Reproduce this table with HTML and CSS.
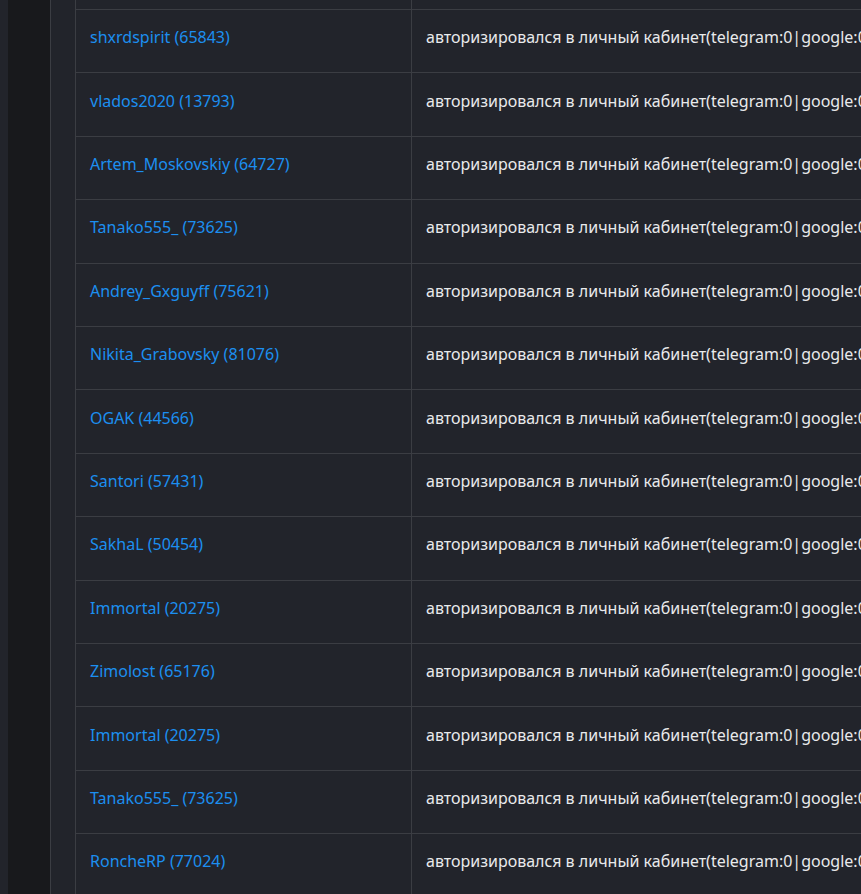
FILE: index.html
```html
<!DOCTYPE html>
<html lang="ru">
<head>
<meta charset="utf-8">
<link rel="stylesheet" href="styles.css">
</head>
<body>
<div class="layout">
  <div class="edge"></div>
  <aside class="sidebar"></aside>
  <main class="content">
    <div class="table">
      <div class="row row-partial"><div class="cell user"></div><div class="cell action"></div></div>
      <div class="row"><div class="cell user"><a href="#">shxrdspirit (65843)</a></div><div class="cell action">авторизировался в личный кабинет(telegram:0|google:0)</div></div>
      <div class="row"><div class="cell user"><a href="#">vlados2020 (13793)</a></div><div class="cell action">авторизировался в личный кабинет(telegram:0|google:0)</div></div>
      <div class="row"><div class="cell user"><a href="#">Artem_Moskovskiy (64727)</a></div><div class="cell action">авторизировался в личный кабинет(telegram:0|google:0)</div></div>
      <div class="row"><div class="cell user"><a href="#">Tanako555_ (73625)</a></div><div class="cell action">авторизировался в личный кабинет(telegram:0|google:0)</div></div>
      <div class="row"><div class="cell user"><a href="#">Andrey_Gxguyff (75621)</a></div><div class="cell action">авторизировался в личный кабинет(telegram:0|google:0)</div></div>
      <div class="row"><div class="cell user"><a href="#">Nikita_Grabovsky (81076)</a></div><div class="cell action">авторизировался в личный кабинет(telegram:0|google:0)</div></div>
      <div class="row"><div class="cell user"><a href="#">OGAK (44566)</a></div><div class="cell action">авторизировался в личный кабинет(telegram:0|google:0)</div></div>
      <div class="row"><div class="cell user"><a href="#">Santori (57431)</a></div><div class="cell action">авторизировался в личный кабинет(telegram:0|google:0)</div></div>
      <div class="row"><div class="cell user"><a href="#">SakhaL (50454)</a></div><div class="cell action">авторизировался в личный кабинет(telegram:0|google:0)</div></div>
      <div class="row"><div class="cell user"><a href="#">Immortal (20275)</a></div><div class="cell action">авторизировался в личный кабинет(telegram:0|google:0)</div></div>
      <div class="row"><div class="cell user"><a href="#">Zimolost (65176)</a></div><div class="cell action">авторизировался в личный кабинет(telegram:0|google:0)</div></div>
      <div class="row"><div class="cell user"><a href="#">Immortal (20275)</a></div><div class="cell action">авторизировался в личный кабинет(telegram:0|google:0)</div></div>
      <div class="row"><div class="cell user"><a href="#">Tanako555_ (73625)</a></div><div class="cell action">авторизировался в личный кабинет(telegram:0|google:0)</div></div>
      <div class="row"><div class="cell user"><a href="#">RoncheRP (77024)</a></div><div class="cell action">авторизировался в личный кабинет(telegram:0|google:0)</div></div>
    </div>
  </main>
</div>
</body>
</html>
```
FILE: styles.css
```css
html, body {
  margin: 0;
  padding: 0;
  height: 100%;
  overflow: hidden;
  background: #22242b;
}
body {
  font-family: "Noto Sans", "Open Sans", sans-serif;
  font-size: 16px;
  color: #e9eaec;
}
.layout {
  display: flex;
  height: 100%;
}
.edge {
  width: 8px;
  flex: none;
  background: #22242b;
}
.sidebar {
  width: 42px;
  flex: none;
  background: #18191c;
  border-right: 1px solid #3b3d43;
}
.content {
  flex: 1;
  min-width: 0;
  padding-left: 24px;
  overflow: hidden;
}
.table {
  width: 1100px;
  border-left: 1px solid #3b3d43;
  background: #22242b;
}
.row {
  display: flex;
  height: 63.42px;
  box-sizing: border-box;
  border-top: 1px solid #3b3d43;
}
.row-partial {
  height: 9px;
  border-top: none;
}
.cell {
  display: flex;
  align-items: center;
  padding: 0 14px 8px;
  white-space: nowrap;
  overflow: hidden;
  box-sizing: border-box;
}
.user {
  width: 336px;
  flex: none;
  border-right: 1px solid #3b3d43;
}
.action {
  flex: 1;
  padding-left: 14px;
}
.user a {
  color: #1c8ff0;
  text-decoration: none;
}
```
